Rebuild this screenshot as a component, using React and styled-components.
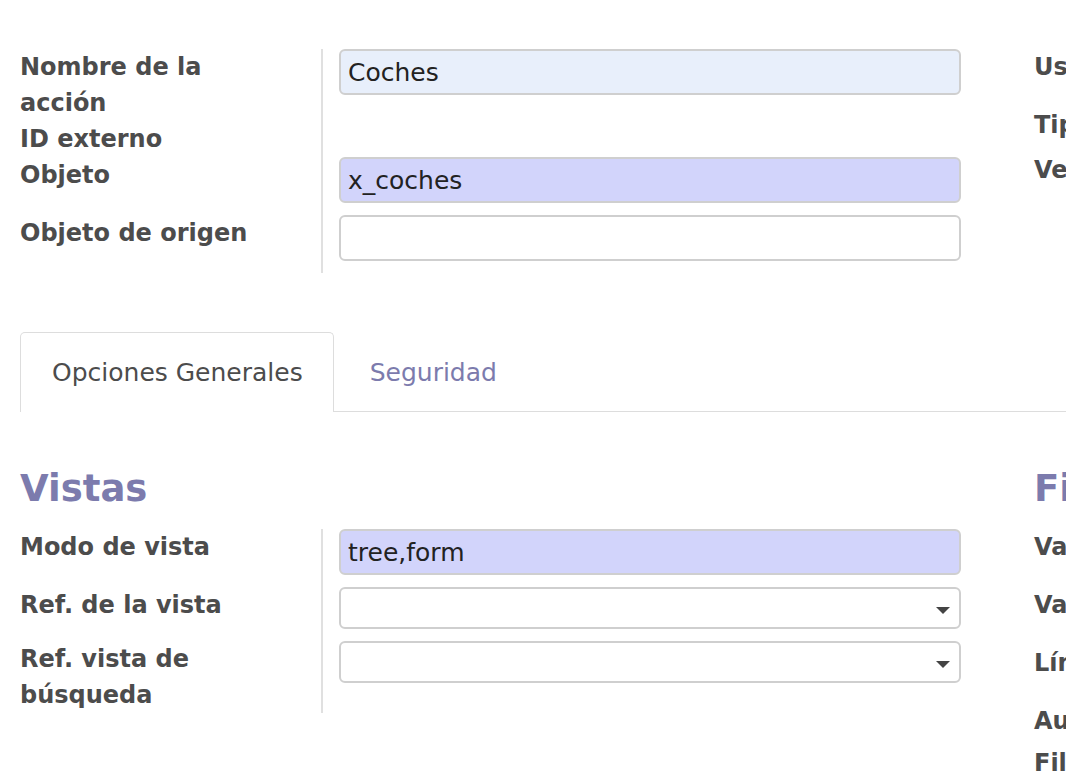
import React from "react";
import styled, { createGlobalStyle } from "styled-components";

const GlobalStyle = createGlobalStyle`
	html, body {
		margin: 0;
		padding: 0;
		background: #ffffff;
	}
	body {
		font-family: "DejaVu Sans", "Liberation Sans", sans-serif;
		color: #4c4c4c;
	}
`;

const Page = styled.div`
	width: 1066px;
	height: 772px;
	overflow: hidden;
	background: #ffffff;
`;

const GroupRow = styled.div`
	display: grid;
	grid-template-columns: 1014px 1014px;
	padding-left: 20px;
	padding-top: ${(p) => p.$top || 0}px;
`;

const Group = styled.div`
	display: flex;
	flex-direction: column;
`;

const FieldTable = styled.div`
	display: grid;
	grid-template-columns: 301px 1fr;
`;

const Label = styled.div`
	font-size: 24px;
	font-weight: bold;
	line-height: 36px;
	color: #4c4c4c;
	padding-right: 40px;
`;

const FieldCell = styled.div`
	border-left: 2px solid #e0e0e0;
	padding: 0 73px 12px 16px;
`;

const Input = styled.div`
	box-sizing: border-box;
	height: ${(p) => p.$h || 46}px;
	border: 2px solid #cfcfcf;
	border-radius: 6px;
	background: ${(p) =>
		p.$tone === "blue" ? "#e8effb" : p.$tone === "purple" ? "#d2d4fb" : "#ffffff"};
	display: flex;
	align-items: center;
	padding: 0 7px;
	font-size: 25px;
	color: #222222;
`;

const Select = styled(Input)`
	height: 42px;
	justify-content: flex-end;
	padding-right: 9px;
`;

const Caret = styled.span`
	width: 0;
	height: 0;
	border-left: 7px solid transparent;
	border-right: 7px solid transparent;
	border-top: 7px solid #444444;
	margin-top: 4px;
`;

const TabBar = styled.div`
	display: flex;
	margin: 59px 0 0 20px;
	border-bottom: 1px solid #dddddd;
	height: 79px;
`;

const Tab = styled.div`
	box-sizing: border-box;
	display: flex;
	align-items: center;
	padding: 0 30px 0 ${(p) => (p.$active ? 31 : 35)}px;
	font-size: 25px;
	color: ${(p) => (p.$active ? "#4c4c4c" : "#7c7bad")};
	border: 1px solid ${(p) => (p.$active ? "#dddddd" : "transparent")};
	border-bottom: none;
	border-radius: 5px 5px 0 0;
	background: ${(p) => (p.$active ? "#ffffff" : "transparent")};
	margin-bottom: ${(p) => (p.$active ? -1 : 0)}px;
	height: ${(p) => (p.$active ? 80 : 79)}px;
`;

const Heading = styled.div`
	font-size: 37px;
	font-weight: bold;
	line-height: 48px;
	color: #7c7bad;
	margin-bottom: 16px;
`;

const Field = ({ label, children }) => (
	<>
		<Label>{label}</Label>
		<FieldCell>{children}</FieldCell>
	</>
);

const App = () => {
	return (
		<Page>
			<GlobalStyle />
			<GroupRow $top={49}>
				<Group>
					<FieldTable>
						<Field label="Nombre de la acción">
							<Input $tone="blue">Coches</Input>
						</Field>
						<Field label="ID externo" />
						<Field label="Objeto">
							<Input $tone="purple">x_coches</Input>
						</Field>
						<Field label="Objeto de origen">
							<Input />
						</Field>
					</FieldTable>
				</Group>
				<Group>
					<FieldTable>
						<Field label="Uso">
							<Input />
						</Field>
						<Field label="Tipo de acción">
							<Input $h={33} />
						</Field>
						<Field label="Ventana destino">
							<Input />
						</Field>
					</FieldTable>
				</Group>
			</GroupRow>

			<TabBar>
				<Tab $active>Opciones Generales</Tab>
				<Tab>Seguridad</Tab>
			</TabBar>

			<GroupRow $top={53}>
				<Group>
					<Heading>Vistas</Heading>
					<FieldTable>
						<Field label="Modo de vista">
							<Input $tone="purple">tree,form</Input>
						</Field>
						<Field label="Ref. de la vista">
							<Select>
								<Caret />
							</Select>
						</Field>
						<Field label="Ref. vista de búsqueda">
							<Select>
								<Caret />
							</Select>
						</Field>
					</FieldTable>
				</Group>
				<Group>
					<Heading>Filtros</Heading>
					<FieldTable>
						<Field label="Valor del dominio">
							<Input />
						</Field>
						<Field label="Valor de contexto">
							<Input />
						</Field>
						<Field label="Límite">
							<Input />
						</Field>
						<Field label="Auto búsqueda">
							<Input $h={30} />
						</Field>
						<Field label="Filtro">
							<Input />
						</Field>
					</FieldTable>
				</Group>
			</GroupRow>
		</Page>
	);
};

export default App;
